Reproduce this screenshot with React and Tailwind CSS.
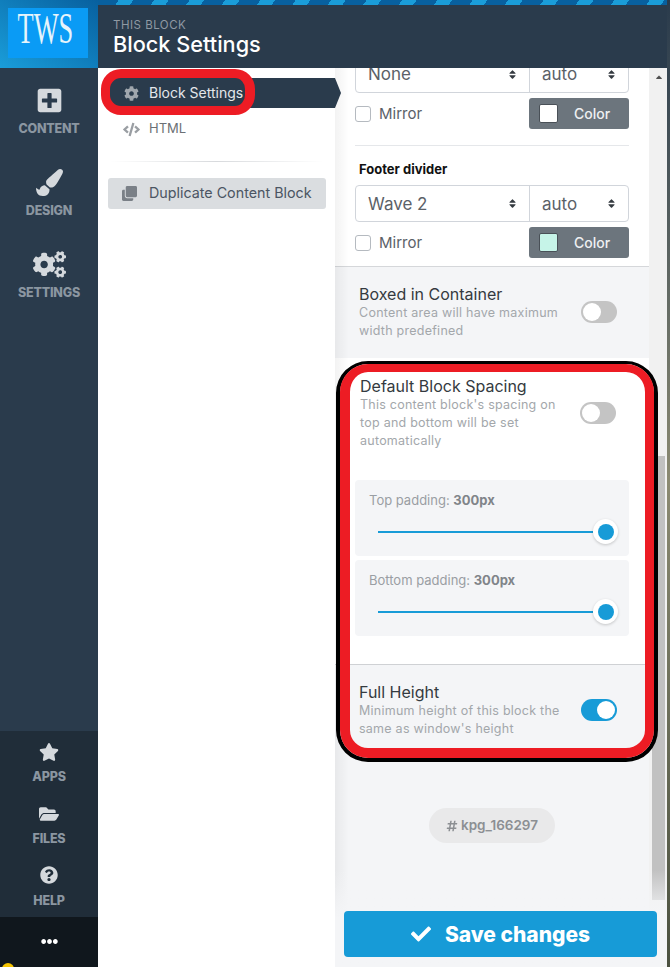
import React from 'react';
import {
  FaPlusSquare, FaPaintBrush, FaCogs, FaStar, FaFolderOpen, FaQuestionCircle,
  FaEllipsisH, FaCheck, FaCog, FaCode, FaClone, FaSort, FaCaretUp, FaHashtag,
} from 'react-icons/fa';

const SideItem = ({ icon: Icon, label, size = 'text-[24px]', gap = 'mt-[8px]', className = '' }) => (
  <div className={`flex flex-col items-center ${className}`}>
    <Icon className={`${size} text-[#d5d9dd]`} />
    <span className={`${gap} text-[12.5px] leading-[14px] font-extrabold text-[#8b96a1] tracking-[-0.2px]`}>{label}</span>
  </div>
);

const SelectBox = ({ label, className = '' }) => (
  <div className={`flex w-[274px] rounded-[4px] border border-[#d1d5db] bg-white text-[17px] text-[#5b6168] ${className}`}>
    <div className="flex flex-1 items-center justify-between border-r border-[#d1d5db] pl-[12px] pr-[11px]">
      <span className="pt-[2px]">{label}</span>
      <FaSort className="text-[11px] text-[#343a40]" />
    </div>
    <div className="flex w-[98px] items-center justify-between pl-[12px] pr-[11px]">
      <span className="pt-[2px]">auto</span>
      <FaSort className="text-[11px] text-[#343a40]" />
    </div>
  </div>
);

const MirrorRow = ({ swatch }) => (
  <div className="mt-[5px] flex h-[31px] items-center justify-between">
    <label className="flex items-center gap-[8px] text-[15px] text-[#5b6168]">
      <span className="h-[16px] w-[16px] rounded-[3px] border border-[#b5bac0] bg-white" />
      <span className="pt-[1px]">Mirror</span>
    </label>
    <button className="flex h-[31px] w-[100px] items-center rounded-[3px] bg-[#6c757d] pl-[10px] text-[14px] font-medium text-[#eef0f2]">
      <span className={`h-[19px] w-[19px] rounded-[2px] border border-[#495057] ${swatch}`} />
      <span className="ml-[16px]">Color</span>
    </button>
  </div>
);

const Toggle = ({ on }) => (
  <div className={`flex h-[22px] w-[36px] shrink-0 items-center rounded-full p-[2px] ${on ? 'justify-end bg-[#179bd7]' : 'bg-[#c4c4c4]'}`}>
    <div className="h-[18px] w-[18px] rounded-full bg-white" />
  </div>
);

const ToggleRow = ({ title, desc, on }) => (
  <div className="flex items-center justify-between">
    <div className="w-[212px]">
      <div className="text-[16px] leading-[20px] text-[#343a40]">{title}</div>
      <div className="text-[12.5px] leading-[18px] tracking-[0.25px] text-[#a3a7ab]">{desc}</div>
    </div>
    <Toggle on={on} />
  </div>
);

const SliderBox = ({ label }) => (
  <div className="h-[76px] rounded-[4px] bg-[#f4f5f7] pl-[14px] pr-[11px] pt-[11px]">
    <div className="text-[13px] leading-[18px] text-[#9a9ea3]">
      {label}: <b className="font-bold text-[#808489]">300px</b>
    </div>
    <div className="mt-[10px] flex items-center pl-[9px]">
      <div className="h-[2px] flex-1 bg-[#179bd7]" />
      <div className="flex h-[25px] w-[25px] shrink-0 items-center justify-center rounded-full bg-white shadow-[0_1px_3px_rgba(0,0,0,0.2)]">
        <div className="h-[16px] w-[16px] rounded-full bg-[#179bd7]" />
      </div>
    </div>
  </div>
);

export default function App() {
  return (
    <div className="relative flex h-[967px] w-[670px] overflow-hidden bg-[#8b8a72] font-['Inter','Noto_Sans',sans-serif]">
      {/* left rail */}
      <aside className="flex w-[98px] shrink-0 flex-col bg-[#2a3b4c]">
        <div className="h-[68px] bg-linear-to-tr from-[#1a9dd9] to-[#08609f] pl-[8px] pt-[8px]">
          <div className="flex h-[50px] w-[80px] items-center justify-center bg-[#0a9bf5] pb-[8px] pr-[6px] font-['Liberation_Serif',serif] text-[44px] leading-none text-[#e6f4fb]">
            <span className="scale-x-[0.6]">TWS</span>
          </div>
        </div>
        <div className="flex flex-1 flex-col pt-[19px]">
          <SideItem icon={FaPlusSquare} label="CONTENT" size="text-[27px]" />
          <SideItem icon={FaPaintBrush} label="DESIGN" size="text-[27px]" className="mt-[33px]" />
          <SideItem icon={FaCogs} label="SETTINGS" size="text-[33px]" gap="mt-[5px]" className="mt-[30px]" />
        </div>
        <div className="flex h-[186px] flex-col items-center bg-[#202d39] pt-[11px]">
          <SideItem icon={FaStar} label="APPS" size="text-[20px]" />
          <SideItem icon={FaFolderOpen} label="FILES" size="text-[20px]" className="mt-[20px]" />
          <SideItem icon={FaQuestionCircle} label="HELP" size="text-[18px]" gap="mt-[10px]" className="mt-[20px]" />
        </div>
        <div className="flex h-[50px] justify-center bg-[#10171d] pt-[16px]">
          <FaEllipsisH className="text-[17px] text-white" />
        </div>
      </aside>

      <main className="flex w-[569px] shrink-0 flex-col">
        <div className="h-[5px] bg-[#08609f] bg-[repeating-linear-gradient(125deg,#08609f_0,#08609f_17px,#1a9dd9_17px,#1a9dd9_29px)]" />
        <header className="relative z-20 h-[63px] bg-[#2a3b4c] pl-[15px] pt-[14px]">
          <div className="text-[11.5px] leading-[12px] tracking-[0.5px] text-[#8f99a3]">THIS BLOCK</div>
          <div className="text-[21.7px] leading-[27px] font-medium text-white">Block Settings</div>
        </header>

        <div className="flex min-h-0 flex-1">
          {/* block nav */}
          <nav className="relative z-10 w-[237px] shrink-0 bg-white pt-[10px] text-[14px]">
            <div className="relative ml-[12px] flex h-[30px] items-center bg-[#2a3b4c] pl-[14px] text-[#e4e7ea]">
              <FaCog className="mr-[10px] text-[15px] text-[#a0a7ae]" />
              <span className="pb-[1px]">Block Settings</span>
              <div className="absolute -right-[6px] top-0 h-[30px] w-[6px] bg-[#2a3b4c] [clip-path:polygon(0_0,100%_50%,0_100%)]" />
            </div>
            <div className="ml-[12px] mt-[6px] flex h-[30px] items-center pl-[13px] text-[13px] text-[#6b7075]">
              <FaCode className="mr-[9px] text-[17px] text-[#9a9ea3]" />
              <span>HTML</span>
            </div>
            <div className="mx-[12px] mt-[17px] h-px bg-linear-to-r from-transparent via-[#d8dadd] to-transparent" />
            <button className="ml-[10px] mt-[16px] flex h-[31px] w-[218px] items-center rounded-[3px] bg-[#dadde0] pl-[14px] text-[14.3px] text-[#4b5563]">
              <FaClone className="mr-[12px] text-[15px] text-[#7a8087]" />
              <span className="pb-[2px]">Duplicate Content Block</span>
            </button>
          </nav>

          {/* settings panel */}
          <section className="relative w-[314px] shrink-0 overflow-hidden bg-white">
            <div className="-mt-[13px] px-[20px]">
              <SelectBox label="None" className="h-[38px]" />
              <MirrorRow swatch="bg-white" />
              <div className="mt-[16px] h-px bg-[#e5e7ea]" />
              <div className="mt-[14px] pl-[4px] text-[13px] leading-[18px] font-bold text-[#111]">Footer divider</div>
              <SelectBox label="Wave 2" className="mt-[7px] h-[37px]" />
              <MirrorRow swatch="bg-[#c6f4e8]" />
            </div>

            <div className="mt-[8px] h-[92px] border-t border-[#d5d7da] bg-[#f4f5f7] pl-[24px] pr-[32px] pt-[17px]">
              <ToggleRow title="Boxed in Container" desc="Content area will have maximum width predefined" />
            </div>

            <div className="h-[306px] px-[20px] pt-[18px]">
              <div className="pl-[5px] pr-[13px]">
                <ToggleRow title="Default Block Spacing" desc="This content block's spacing on top and bottom will be set automatically" />
              </div>
              <div className="mt-[30px] flex w-[274px] flex-col gap-[4px]">
                <SliderBox label="Top padding" />
                <SliderBox label="Bottom padding" />
              </div>
            </div>

            <div className="h-[303px] border-t border-[#cfd1d4] bg-[#f4f5f7]">
              <div className="pl-[24px] pr-[32px] pt-[17px]">
                <ToggleRow title="Full Height" desc="Minimum height of this block the same as window's height" on />
              </div>
              <div className="mt-[70px] flex justify-center">
                <div className="flex h-[35px] w-[126px] items-center justify-center rounded-full bg-[#e9e9ea] text-[13.5px] font-semibold text-[#8c8f93]">
                  <FaHashtag className="mr-[3px] text-[12px]" />
                  kpg_166297
                </div>
              </div>
            </div>

            <div className="pointer-events-none absolute inset-y-0 left-0 w-[14px] bg-linear-to-r from-black/5 to-transparent" />
          </section>

          {/* scrollbar */}
          <div className="relative w-[18px] shrink-0 bg-[#f1f1f1]">
            <FaCaretUp className="absolute left-[5px] top-[4px] text-[10px] text-[#505050]" />
            <div className="absolute left-[3px] top-[388px] h-[444px] w-[13px] bg-[#c1c1c1]" />
          </div>
        </div>
      </main>

      <div className="z-20 w-[3px] shrink-0 bg-linear-to-b from-[#2a3b4c] via-[#8b8a72] to-[#4b5140]" />

      {/* bottom fade and save */}
      <div className="absolute bottom-0 left-[335px] z-20 h-[97px] w-[332px] bg-linear-to-b from-transparent via-[#f4f5f7] to-[#f4f5f7]" />
      <button className="absolute left-[344px] top-[911px] z-20 flex h-[46px] w-[313px] items-center justify-center rounded-[4px] bg-[#179bd7] text-[21px] font-extrabold text-white">
        <FaCheck className="mr-[14px] text-[20px]" />
        <span className="pt-[1px]">Save changes</span>
      </button>

      {/* red annotations pasted over the screenshot */}
      <div className="pointer-events-none absolute left-[101px] top-[69px] z-30 h-[46px] w-[154px] rounded-[20px] border-[9px] border-r-[10px] border-[#ed1c24]" />
      <div className="pointer-events-none absolute left-[336px] top-[361px] z-30 h-[401px] w-[322px] rounded-[32px] border-[4px] border-t-[3px] border-black">
        <div className="h-full w-full rounded-[28px] border-t-[8px] border-r-[9px] border-b-[10px] border-l-[10px] border-[#ed1c24]" />
      </div>
      <div className="absolute -bottom-[8px] left-[2px] z-30 h-[12px] w-[12px] rounded-full bg-[#f5c400]" />
    </div>
  );
}
